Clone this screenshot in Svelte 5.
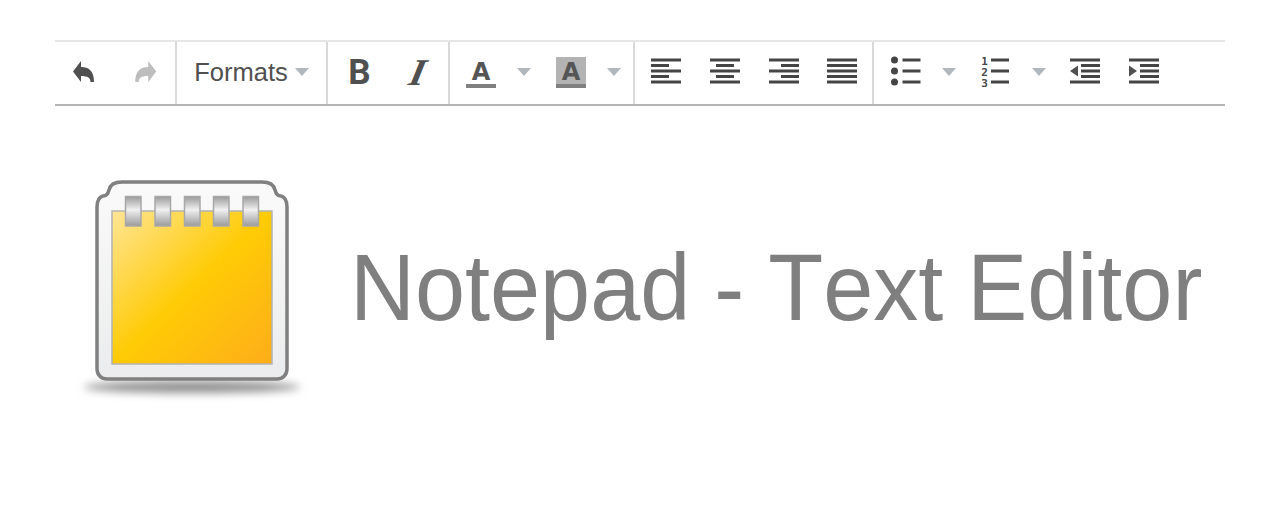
<script>
    // one row of five bars, widths and offsets taken per alignment
    const aligns = [
        { title: "Align left", bars: [[0, 30], [0, 18], [0, 30], [0, 18], [0, 30]] },
        { title: "Align center", bars: [[0, 30], [6, 18], [0, 30], [6, 18], [0, 30]] },
        { title: "Align right", bars: [[0, 30], [12, 18], [0, 30], [12, 18], [0, 30]] },
        { title: "Justify", bars: [[0, 30], [0, 30], [0, 30], [0, 30], [0, 30]] },
    ];
    const barY = [-0.500, 5, 10.500, 16, 21.500];
    const rings = [125, 154.5, 184, 213, 242.5];
</script>

<div class="page">
    <div class="toolbar">
        <div class="group history">
            <button class="btn hist" aria-label="Undo">
                <svg width="24" height="22" viewBox="0 0 24 22">
                    <path class="dark" d="M0 10.500 L8 0 V6 C16 6 21 10 21 21 H17.500 C17.500 17 15 15 8 15 V21 Z" />
                </svg>
            </button>
            <button class="btn hist" aria-label="Redo">
                <svg width="24" height="22" viewBox="0 0 24 22">
                    <path class="faded" d="M23.250 10.500 L15.250 0 V6 C7.250 6 2.250 10 2.250 21 H5.750 C5.750 17 8.250 15 15.250 15 V21 Z" />
                </svg>
            </button>
        </div>

        <div class="group formats">
            <button class="btn fmt">Formats<span class="caret"></span></button>
        </div>

        <div class="group styles">
            <button class="btn glyph bold">B</button>
            <button class="btn glyph italic"><span>I</span></button>
        </div>

        <div class="group colors">
            <button class="btn split">
                <span class="swatch"><span class="letter">A</span></span>
                <span class="caret"></span>
            </button>
            <button class="btn split">
                <span class="swatch filled"><span class="letter">A</span></span>
                <span class="caret"></span>
            </button>
        </div>

        <div class="group alignment">
            {#each aligns as a}
                <button class="btn" aria-label={a.title}>
                    <svg width="30" height="26" viewBox="0 0 30 26">
                        {#each a.bars as b, i}
                            <rect class="bar" x={b[0]} y={barY[i]} width={b[1]} height="3" />
                        {/each}
                    </svg>
                </button>
            {/each}
        </div>

        <div class="group lists">
            <button class="btn split list" aria-label="Bullet list">
                <svg width="30" height="26" viewBox="0 0 30 26">
                    {#each [0, 11, 22] as y}
                        <circle class="dot" cx="3.500" cy={y + 1} r="3.500" />
                        <rect class="bar" x="11.500" y={y - 0.500} width="18" height="3" />
                    {/each}
                </svg>
                <span class="caret"></span>
            </button>
            <button class="btn split list" aria-label="Numbered list">
                <svg width="30" height="26" viewBox="0 0 30 26">
                    {#each [0, 11, 22] as y, i}
                        <text class="num" x="3.500" y={y + 5.500}>{i + 1}</text>
                        <rect class="bar" x="10" y={y - 0.500} width="18" height="3" />
                    {/each}
                </svg>
                <span class="caret"></span>
            </button>
            <button class="btn" aria-label="Decrease indent">
                <svg width="30" height="26" viewBox="0 0 30 26">
                    <rect class="bar" x="0" y="-0.500" width="30" height="3" />
                    <rect class="bar" x="11" y="5" width="19" height="3" />
                    <rect class="bar" x="11" y="10.500" width="19" height="3" />
                    <rect class="bar" x="11" y="16" width="19" height="3" />
                    <rect class="bar" x="0" y="21.500" width="30" height="3" />
                    <path class="dark" d="M0 12 L8 6.500 V17.500 Z" />
                </svg>
            </button>
            <button class="btn" aria-label="Increase indent">
                <svg width="30" height="26" viewBox="0 0 30 26">
                    <rect class="bar" x="0" y="-0.500" width="30" height="3" />
                    <rect class="bar" x="11" y="5" width="19" height="3" />
                    <rect class="bar" x="11" y="10.500" width="19" height="3" />
                    <rect class="bar" x="11" y="16" width="19" height="3" />
                    <rect class="bar" x="0" y="21.500" width="30" height="3" />
                    <path class="dark" d="M8 12 L0 6.500 V17.500 Z" />
                </svg>
            </button>
        </div>
    </div>

    <div class="hero">
        <svg class="pad" width="240" height="240" viewBox="0 0 240 240">
            <defs>
                <linearGradient id="paper" x1="0" y1="0" x2="1" y2="1">
                    <stop offset="0" stop-color="#ffe596" />
                    <stop offset="0.500" stop-color="#ffcb05" />
                    <stop offset="1" stop-color="#fdad1a" />
                </linearGradient>
                <linearGradient id="ring" x1="0" y1="0" x2="0" y2="1">
                    <stop offset="0" stop-color="#9a9a9a" />
                    <stop offset="0.450" stop-color="#f0f0f0" />
                    <stop offset="1" stop-color="#9a9a9a" />
                </linearGradient>
                <linearGradient id="plate" x1="0" y1="0" x2="0" y2="1">
                    <stop offset="0" stop-color="#fafafa" />
                    <stop offset="1" stop-color="#ebeced" />
                </linearGradient>
                <filter id="soft" x="-20%" y="-150%" width="140%" height="400%">
                    <feGaussianBlur stdDeviation="4" />
                </filter>
            </defs>
            <ellipse cx="122" cy="217" rx="108" ry="6" fill="#909090" filter="url(#soft)" />
            <path
                class="plate"
                d="M52 12 H192 C200 12 204 15 205 20 C206 24 208 26 211 26 C214.500 27 217 31 217 37 V199 C217 205 212.500 209 207 209 H37 C31.500 209 27 205 27 199 V37 C27 31 29.500 27 33 26 C36 26 38 24 39 20 C40 15 44 12 52 12 Z"
                fill="url(#plate)"
            />
            <rect x="42" y="41" width="160" height="153" fill="url(#paper)" stroke="#b3b3b3" stroke-width="1.500" />
            {#each rings as x}
                <rect x={x - 69.500} y="26.500" width="15.500" height="29.500" fill="url(#ring)" stroke="#a8a8a8" stroke-width="1.500" />
            {/each}
        </svg>
        <h1>Notepad - Text Editor</h1>
    </div>
</div>

<style>
    :global(body) {
        background: #fff;
    }
    .page {
        padding: 40px 55px 0;
        font-family: "Liberation Sans", Arial, sans-serif;
    }
    .toolbar {
        display: flex;
        height: 62px;
        border-top: 2px solid #e6e6e6;
        border-bottom: 2px solid #b4b4b4;
    }
    .group {
        display: flex;
        box-sizing: border-box;
        border-right: 2px solid #d9d9d9;
    }
    .history { width: 122px; }
    .formats { width: 151px; }
    .styles { width: 122px; padding-left: 2px; }
    .colors { width: 185px; padding-left: 2px; }
    .alignment { width: 239px; padding-left: 2px; }
    .lists { border-right: 0; padding-left: 2px; }
    .btn {
        display: flex;
        align-items: center;
        justify-content: center;
        box-sizing: border-box;
        width: 58.7px;
        padding: 0 0 2px;
        border: 0;
        background: none;
        color: #505050;
        font-family: inherit;
    }
    .btn svg {
        display: block;
        overflow: visible;
    }
    .hist {
        width: 60.500px;
    }
    .fmt {
        width: 100%;
        font-size: 25.500px;
    }
    .glyph {
        width: 59px;
    }
    .bold {
        font-family: Roboto, sans-serif;
        font-size: 35px;
        font-weight: 700;
    }
    .italic {
        font-family: "Liberation Serif", serif;
        font-size: 38px;
        font-weight: 700;
    }
    .italic span {
        display: inline-block;
        transform: skewX(-22deg);
    }
    .caret {
        display: block;
        width: 0;
        height: 0;
        margin-left: 7px;
        border: 7px solid transparent;
        border-top: 8px solid #b0b8be;
        border-bottom: 0;
    }
    .split {
        width: 90px;
        justify-content: flex-start;
        padding-left: 14px;
        gap: 21px;
    }
    .split .caret {
        margin-left: 0;
    }
    .swatch {
        display: block;
        box-sizing: border-box;
        width: 30px;
        height: 31px;
        margin-top: 1px;
        border-bottom: 4px solid #808080;
        text-align: center;
    }
    .swatch.filled {
        background: #b3b3b3;
    }
    .letter {
        font-family: "DejaVu Sans", sans-serif;
        font-weight: 700;
        font-size: 24px;
        line-height: 31px;
        color: #555;
    }
    .list {
        padding-left: 15px;
    }
    .bar, .dot {
        fill: #454545;
    }
    .dark {
        fill: #505050;
    }
    .faded {
        fill: #bdbdbd;
    }
    .num {
        fill: #454545;
        font-size: 11px;
        font-weight: 700;
        font-family: "DejaVu Sans Mono", monospace;
        text-anchor: middle;
    }
    .hero {
        display: flex;
        align-items: center;
        padding: 64px 0 0 15px;
    }
    .plate {
        stroke: #808080;
        stroke-width: 3.500;
    }
    h1 {
        margin: 0 0 2px 40px;
        font-size: 90px;
        font-weight: 400;
        font-kerning: none;
        word-spacing: -1px;
        color: #7f7f7f;
        white-space: nowrap;
        transform: scaleY(1.05);
        transform-origin: 0 83px;
    }
</style>
